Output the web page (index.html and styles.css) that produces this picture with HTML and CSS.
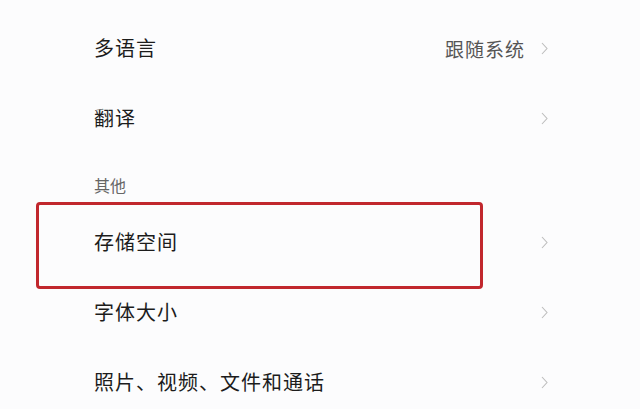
FILE: index.html
```html
<!DOCTYPE html>
<html>
  <head>
    <title>设置</title>
    <link rel="stylesheet" href="styles.css">
  </head>
  <body>
    <div class="settings">
      <div class="row">
        <span class="label">多语言</span>
        <span class="value">跟随系统</span>
        <svg class="chevron" width="7" height="13" viewBox="0 0 7 13"><path d="M1 1 L6 6.5 L1 12" fill="none" stroke="#bdbdbd" stroke-width="1.1"/></svg>
      </div>
      <div class="row">
        <span class="label">翻译</span>
        <svg class="chevron" width="7" height="13" viewBox="0 0 7 13"><path d="M1 1 L6 6.5 L1 12" fill="none" stroke="#bdbdbd" stroke-width="1.1"/></svg>
      </div>
      <div class="section">其他</div>
      <div class="row highlighted">
        <span class="label">存储空间</span>
        <svg class="chevron" width="7" height="13" viewBox="0 0 7 13"><path d="M1 1 L6 6.5 L1 12" fill="none" stroke="#bdbdbd" stroke-width="1.1"/></svg>
        <div class="mark"></div>
      </div>
      <div class="row">
        <span class="label">字体大小</span>
        <svg class="chevron" width="7" height="13" viewBox="0 0 7 13"><path d="M1 1 L6 6.5 L1 12" fill="none" stroke="#bdbdbd" stroke-width="1.1"/></svg>
      </div>
      <div class="row">
        <span class="label">照片、视频、文件和通话</span>
        <svg class="chevron" width="7" height="13" viewBox="0 0 7 13"><path d="M1 1 L6 6.5 L1 12" fill="none" stroke="#bdbdbd" stroke-width="1.1"/></svg>
      </div>
    </div>
  </body>
</html>
```

FILE: styles.css
```css
body {
  margin: 0;
  padding: 0;
  background-color: #fcfcfd;
  font-family: "Noto Sans CJK SC", "Noto Sans", sans-serif;
  color: #1c1c1c;
  overflow: hidden;
}
.settings {
  padding: 13px 92px 0 94px;
}
.row {
  position: relative;
  display: flex;
  align-items: center;
  height: 70px;
}
.label {
  flex: 1;
  font-size: 20px;
  line-height: 1;
  letter-spacing: 1px;
}
.value {
  font-size: 19px;
  line-height: 1;
  color: #555;
  letter-spacing: 1px;
  margin-right: 16px;
}
.chevron {
  display: block;
}
.section {
  height: 54px;
  box-sizing: border-box;
  padding-top: 24px;
  font-size: 16px;
  line-height: 16px;
  color: #666;
}
.mark {
  position: absolute;
  left: -58px;
  top: -5px;
  width: 447px;
  height: 87px;
  box-sizing: border-box;
  border: 3px solid #c1272d;
  border-radius: 4px;
}
```
